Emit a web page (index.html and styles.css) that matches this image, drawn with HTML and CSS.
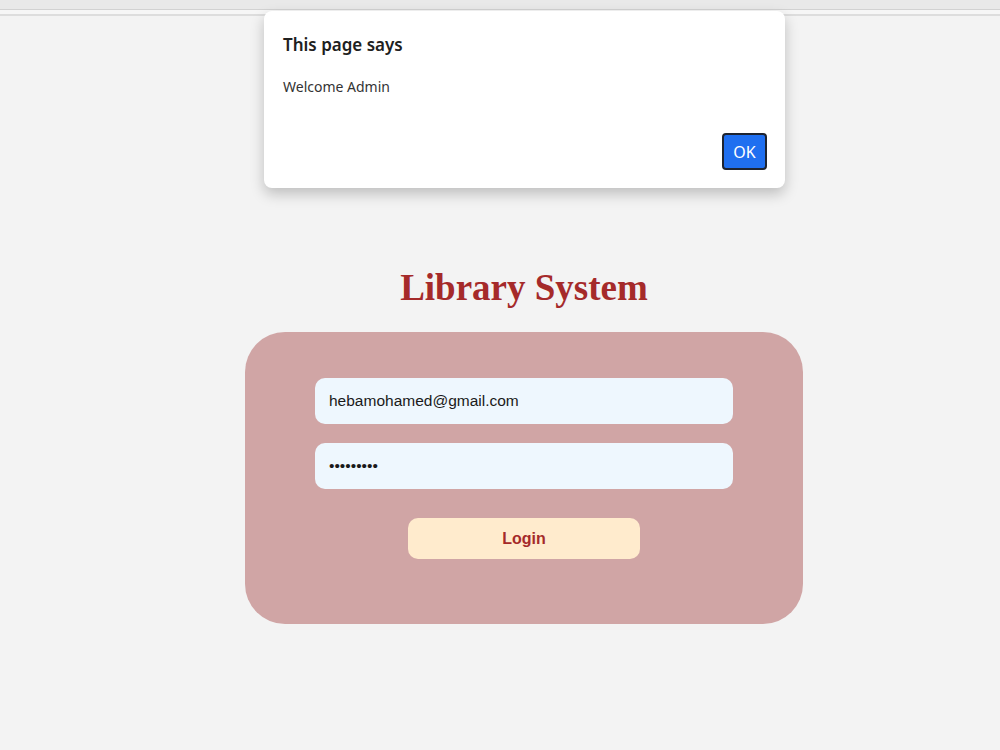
FILE: index.html
```html
<!DOCTYPE html>
<html>
<head>
  <meta charset="utf-8">
  <title>Library System</title>
  <link rel="stylesheet" href="styles.css">
</head>
<body>
  <div class="top-strip">
    <div class="strip-upper"></div>
    <div class="strip-lower"></div>
  </div>

  <main class="page">
    <h1 class="title">Library System</h1>
    <form class="login-card" onsubmit="return false;">
      <input class="field" type="email" value="hebamohamed@gmail.com">
      <input class="field" type="password" value="123456789">
      <button class="login-btn" type="submit">Login</button>
    </form>
  </main>

  <div class="alert-box">
    <div class="alert-title">This page says</div>
    <div class="alert-text">Welcome Admin</div>
    <div class="alert-actions">
      <button class="alert-ok">OK</button>
    </div>
  </div>
</body>
</html>
```

FILE: styles.css
```css
body { margin: 0; background: #f3f3f3; min-height: 750px; }

.top-strip { height: 16px; }
.strip-upper { height: 9px; background: #e9e9e9; border-bottom: 1px solid #d2d2d2; }
.strip-lower { height: 4px; background: #f6f6f6; border-bottom: 2px solid #dddddd; }

.page { padding: 0 0 0 48px; display: flex; flex-direction: column; align-items: center; }

.title {
  font-family: "Liberation Serif", "Times New Roman", serif;
  font-size: 37px;
  line-height: 41px;
  font-weight: bold;
  color: #a52a2a;
  margin: 251px 0 24px;
}

.login-card {
  width: 558px;
  box-sizing: border-box;
  background: #d0a5a5;
  border-radius: 40px;
  padding: 46px 70px 65px;
  display: flex;
  flex-direction: column;
  align-items: center;
}
.field {
  width: 100%;
  height: 46px;
  box-sizing: border-box;
  border: none;
  border-radius: 10px;
  background: #eef7fe;
  padding: 0 14px;
  font-family: "Liberation Sans", Arial, sans-serif;
  font-size: 15.5px;
  color: #1a1a1a;
  outline: none;
}
.field + .field { margin-top: 19px; }
.login-btn {
  margin-top: 29px;
  width: 232px;
  height: 41px;
  border: none;
  border-radius: 10px;
  background: #ffebcd;
  color: #a52a2a;
  font-family: "Liberation Sans", Arial, sans-serif;
  font-size: 16px;
  font-weight: bold;
}

/* native-style alert sitting on top of the page */
.alert-box {
  position: absolute;
  top: 11px;
  left: 264px;
  width: 521px;
  height: 177px;
  box-sizing: border-box;
  background: #fff;
  border-radius: 8px;
  box-shadow: 0 6px 14px rgba(0,0,0,0.22);
  padding: 22px 18px 18px 19px;
  font-family: "Noto Sans", "Open Sans", sans-serif;
  color: #202020;
  display: flex;
  flex-direction: column;
}
.alert-title { font-size: 17px; font-weight: 600; line-height: 24px; }
.alert-text { font-size: 14px; line-height: 20px; margin-top: 20px; color: #333; }
.alert-actions { margin-top: auto; display: flex; justify-content: flex-end; }
.alert-ok {
  width: 45px;
  height: 37px;
  box-sizing: border-box;
  background: #1f6ff0;
  color: #fff;
  border: 2px solid #1e2430;
  border-radius: 4px;
  font-family: "Noto Sans", "Open Sans", sans-serif;
  font-size: 16px;
  padding: 0;
}
```
